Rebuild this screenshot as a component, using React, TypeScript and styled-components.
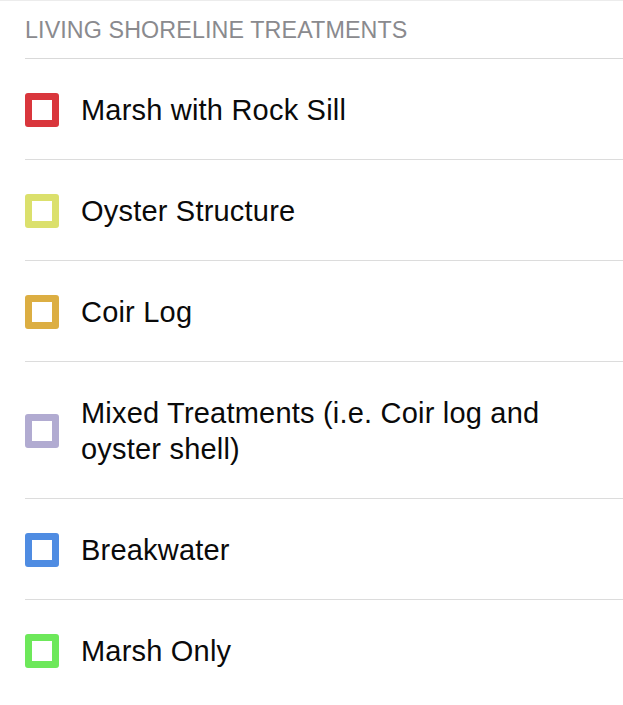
import React from "react";
import styled, { createGlobalStyle } from "styled-components";

const GlobalStyle = createGlobalStyle`
  html, body {
    margin: 0;
    padding: 0;
    background: #ffffff;
  }
  body {
    font-family: "Liberation Sans", Arial, sans-serif;
    -webkit-font-smoothing: antialiased;
  }
`;

type treatmentType = {
  label: string;
  color: string;
};

const treatments: Array<treatmentType> = [
  { label: "Marsh with Rock Sill", color: "#d9363c" },
  { label: "Oyster Structure", color: "#dbe06c" },
  { label: "Coir Log", color: "#dcae42" },
  { label: "Mixed Treatments (i.e. Coir log and oyster shell)", color: "#b1abd1" },
  { label: "Breakwater", color: "#4f8ce2" },
  { label: "Marsh Only", color: "#6de85a" },
];

const App = () => {
  return (
    <>
      <GlobalStyle />
      <StyledSection>
        <div className="section-inner">
          <SectionHeader>Living Shoreline Treatments</SectionHeader>
          <List>
            {treatments.map((d) => (
              <Row key={d.label}>
                <Swatch $color={d.color} />
                <Label>{d.label}</Label>
              </Row>
            ))}
          </List>
        </div>
      </StyledSection>
    </>
  );
};

const StyledSection = styled.section`
  width: 100%;
  min-height: 100vh;
  border-top: 1px solid #ececec;
  box-sizing: border-box;

  .section-inner {
    padding-left: 25px;
  }
`;

const SectionHeader = styled.div`
  padding: 15px 0 14px;
  line-height: 28px;
  font-size: 23.3px;
  color: #8a8a8e;
  text-transform: uppercase;
  letter-spacing: 0.1px;
  border-bottom: 1px solid #d9d9d9;
`;

const List = styled.ul`
  list-style: none;
  margin: 0;
  padding: 0;
`;

const Row = styled.li`
  display: flex;
  align-items: center;
  padding: 33px 60px 31px 0;
  border-bottom: 1px solid #dcdcdc;

  &:last-child {
    border-bottom: none;
  }
`;

const Swatch = styled.span<{ $color: string }>`
  flex: 0 0 34px;
  width: 34px;
  height: 34px;
  margin-top: -1px;
  box-sizing: border-box;
  border: 7px solid ${(p) => p.$color};
  border-radius: 3px;
  background: #ffffff;
`;

const Label = styled.span`
  margin-left: 22px;
  font-size: 29px;
  line-height: 36px;
  letter-spacing: 0.2px;
  color: #0a0a0a;
`;

App.displayName = "App";
export default App;
